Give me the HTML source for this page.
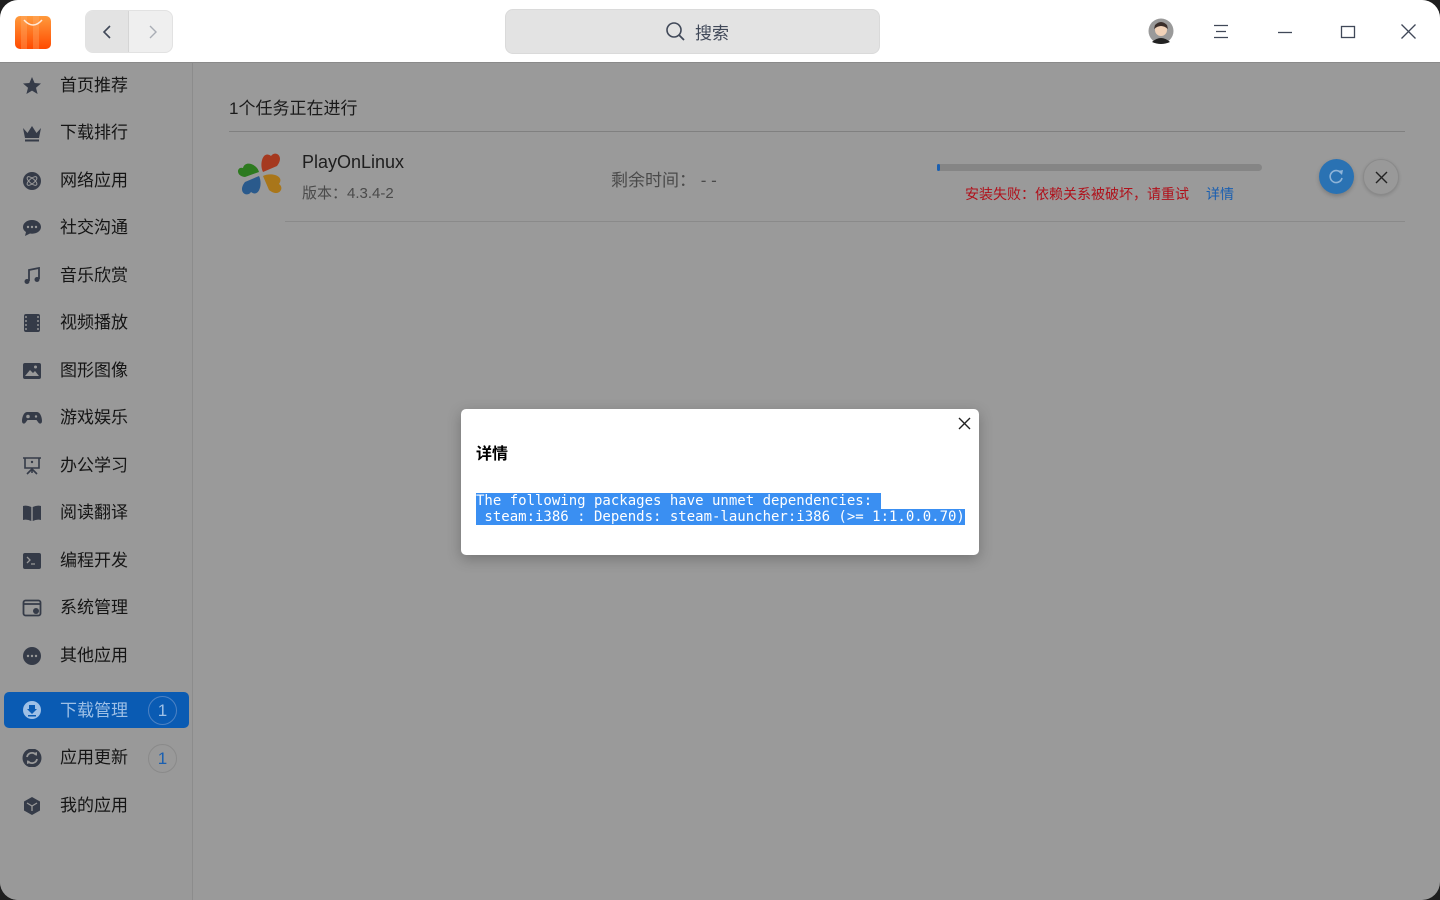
<!DOCTYPE html>
<html><head><meta charset="utf-8"><style>
*{margin:0;padding:0;box-sizing:border-box}
body{width:1440px;height:900px;background:#1e1e1e;font-family:"Liberation Sans","Noto Sans CJK SC",sans-serif;overflow:hidden;position:relative}
.win{position:absolute;left:0;top:0;width:1440px;height:900px;border-radius:18px;overflow:hidden;background:#9a9a9a}
.title{position:absolute;left:0;top:0;width:1440px;height:63px;background:#fff;border-bottom:1px solid #8a8a8a}
.side{position:absolute;left:0;top:63px;width:193px;height:837px;background:#999;border-right:1px solid #8c8c8c}
.item{position:absolute;left:0;height:36px;width:193px;font-size:17px;color:#151515;line-height:36px}
.item .ic{position:absolute;left:22px;top:9px;width:20px;height:18px}
.item span{position:absolute;left:60px}
.sel{left:4px;width:185px;background:#0a5bb3;border-radius:5px;color:#9ec0e6}
.badge{position:absolute;left:148px;top:4px;width:29px;height:29px;border:1px solid #8a8a8a;border-radius:50%;text-align:center;line-height:27px;font-size:17px;color:#1a5fb0}
.mono{font-family:"DejaVu Sans Mono","Liberation Mono",monospace;font-size:14px;line-height:16px;white-space:pre;color:#fff}
.mono span{background:#3a8ff2}
</style></head><body>
<div class="win">
<div class="title">
 <svg style="position:absolute;left:15px;top:14px" width="36" height="35" viewBox="0 0 36 35"><defs><linearGradient id="g" x1="0" y1="0" x2="0" y2="1"><stop offset="0" stop-color="#ff9a3c"/><stop offset="1" stop-color="#ff4a00"/></linearGradient></defs><rect x="0" y="2" width="36" height="33" rx="5" fill="url(#g)"/><rect x="6" y="2" width="6" height="33" fill="#ffb070" opacity=".35"/><rect x="18" y="2" width="6" height="33" fill="#ffb070" opacity=".35"/><path d="M9 6 Q18 16 27 6" stroke="#fff" stroke-width="1.5" fill="none" opacity=".8"/></svg>
 <div style="position:absolute;left:85px;top:10px;width:88px;height:43px;border-radius:8px;background:#efefef;border:1px solid #e2e2e2;overflow:hidden"><div style="position:absolute;left:0;top:0;width:43px;height:43px;background:#e3e3e3;border-right:1px solid #d5d5d5"></div>
 <svg style="position:absolute;left:14px;top:13px" width="16" height="16"><path d="M10 2 L4 8 L10 14" stroke="#404858" stroke-width="1.6" fill="none"/></svg>
 <svg style="position:absolute;left:58px;top:13px" width="16" height="16"><path d="M6 2 L12 8 L6 14" stroke="#a9adb5" stroke-width="1.4" fill="none"/></svg></div>
 <div style="position:absolute;left:505px;top:9px;width:375px;height:45px;border-radius:8px;background:#e3e3e3;border:1px solid #dadada"></div>
 <svg style="position:absolute;left:665px;top:21px" width="22" height="22"><circle cx="9" cy="9" r="7" stroke="#404858" stroke-width="1.6" fill="none"/><path d="M14 14 L19 19" stroke="#404858" stroke-width="1.8"/></svg>
 <div style="position:absolute;left:695px;top:19px;font-size:17px;color:#404858">搜索</div>
 <svg style="position:absolute;left:1148px;top:18px" width="26" height="26"><circle cx="13" cy="13" r="12.5" fill="#9a9a9a"/><circle cx="13" cy="12" r="6" fill="#f1d2b8"/><path d="M7 7 Q13 1 19 7 L20 11 Q13 5 6 11Z" fill="#3a2e2a"/><path d="M4 24 Q13 16 22 24 Q13 28 4 24Z" fill="#222"/></svg>
 <svg style="position:absolute;left:1213px;top:24px" width="16" height="16"><path d="M1 1.5H15M3 7.5H13M1 13.5H15" stroke="#404858" stroke-width="1.3"/></svg>
 <svg style="position:absolute;left:1277px;top:24px" width="16" height="16"><path d="M1 8.5H15" stroke="#404858" stroke-width="1.3"/></svg>
 <svg style="position:absolute;left:1340px;top:24px" width="16" height="16"><rect x="1.5" y="2.5" width="13" height="11" stroke="#404858" stroke-width="1.3" fill="none"/></svg>
 <svg style="position:absolute;left:1400px;top:23px" width="17" height="17"><path d="M1.5 1.5L15.5 15.5M15.5 1.5L1.5 15.5" stroke="#404858" stroke-width="1.3"/></svg>
</div>
<div class="side">
 <div class="item" style="top:5px"><svg class="ic" viewBox="0 0 20 18"><path d="M10 0 L12.6 6 L19 6.5 L14 10.7 L15.6 17 L10 13.6 L4.4 17 L6 10.7 L1 6.5 L7.4 6Z" fill="#353b48"/></svg><span>首页推荐</span></div>
 <div class="item" style="top:52px"><svg class="ic" viewBox="0 0 20 18"><path d="M1 4 L5.5 9 L10 2 L14.5 9 L19 4 L17 14 H3Z" fill="#353b48"/><rect x="3" y="15.5" width="14" height="2" fill="#353b48"/></svg><span>下载排行</span></div>
 <div class="item" style="top:100px"><svg class="ic" viewBox="0 0 20 18"><circle cx="10" cy="9" r="9" fill="#353b48"/><ellipse cx="10" cy="9" rx="6" ry="2.5" stroke="#999" fill="none" transform="rotate(40 10 9)"/><ellipse cx="10" cy="9" rx="6" ry="2.5" stroke="#999" fill="none" transform="rotate(-40 10 9)"/></svg><span>网络应用</span></div>
 <div class="item" style="top:147px"><svg class="ic" viewBox="0 0 20 18"><path d="M10 1 C4.5 1 1 4.5 1 8 C1 10.5 2.5 12 4 13 L3 17 L8 14.5 C8.6 14.6 9.3 14.7 10 14.7 C15.5 14.7 19 11.5 19 8 C19 4.5 15.5 1 10 1Z" fill="#353b48"/><circle cx="6" cy="8" r="1.2" fill="#999"/><circle cx="10" cy="8" r="1.2" fill="#999"/><circle cx="14" cy="8" r="1.2" fill="#999"/></svg><span>社交沟通</span></div>
 <div class="item" style="top:195px"><svg class="ic" viewBox="0 0 20 18"><path d="M7 14 V3 L17 1 V12" stroke="#353b48" stroke-width="1.8" fill="none"/><circle cx="5" cy="14.5" r="2.5" fill="#353b48"/><circle cx="15" cy="12.5" r="2.5" fill="#353b48"/></svg><span>音乐欣赏</span></div>
 <div class="item" style="top:242px"><svg class="ic" viewBox="0 0 20 18"><rect x="2" y="0" width="16" height="18" rx="2" fill="#353b48"/><path d="M4 2v2M4 6v2M4 10v2M4 14v2M16 2v2M16 6v2M16 10v2M16 14v2" stroke="#999" stroke-width="1.4"/></svg><span>视频播放</span></div>
 <div class="item" style="top:290px"><svg class="ic" viewBox="0 0 20 18"><rect x="1" y="1" width="18" height="16" rx="2" fill="#353b48"/><path d="M3 14 L8 8 L11 11 L13 9 L17 14Z" fill="#999"/><circle cx="13.5" cy="5" r="1.5" fill="#999"/></svg><span>图形图像</span></div>
 <div class="item" style="top:337px"><svg class="ic" viewBox="0 0 20 18"><path d="M5 3 H15 C18 3 20 8 20 12 C20 15 17.5 15.5 16 13 L14.5 11 H5.5 L4 13 C2.5 15.5 0 15 0 12 C0 8 2 3 5 3Z" fill="#353b48"/><circle cx="6" cy="7.5" r="1.8" fill="#999"/><circle cx="14" cy="7.5" r="1.2" fill="#999"/></svg><span>游戏娱乐</span></div>
 <div class="item" style="top:385px"><svg class="ic" viewBox="0 0 20 18"><path d="M1 1H19M3 1V11H17V1M10 11V16M10 12L5 17M10 12L15 17" stroke="#353b48" stroke-width="1.6" fill="none"/><circle cx="10" cy="5" r="1.2" fill="#353b48"/></svg><span>办公学习</span></div>
 <div class="item" style="top:432px"><svg class="ic" viewBox="0 0 20 18"><path d="M1 2 Q5 1 9.3 3 V17 Q5 15 1 16Z M10.7 3 Q15 1 19 2 V16 Q15 15 10.7 17Z" fill="#353b48"/></svg><span>阅读翻译</span></div>
 <div class="item" style="top:480px"><svg class="ic" viewBox="0 0 20 18"><rect x="1" y="1" width="18" height="16" rx="2" fill="#353b48"/><path d="M5 5L8 8L5 11M9 12H13" stroke="#999" stroke-width="1.3" fill="none"/></svg><span>编程开发</span></div>
 <div class="item" style="top:527px"><svg class="ic" viewBox="0 0 20 18"><rect x="1.5" y="1.5" width="17" height="15" rx="2" stroke="#353b48" stroke-width="1.8" fill="none"/><path d="M1.5 5H18.5" stroke="#353b48" stroke-width="1.8"/><circle cx="14" cy="12" r="3" fill="#353b48"/></svg><span>系统管理</span></div>
 <div class="item" style="top:575px"><svg class="ic" viewBox="0 0 20 18"><circle cx="10" cy="9" r="9" fill="#353b48"/><circle cx="6" cy="9" r="1.2" fill="#999"/><circle cx="10" cy="9" r="1.2" fill="#999"/><circle cx="14" cy="9" r="1.2" fill="#999"/></svg><span>其他应用</span></div>
 <div class="item sel" style="top:629px"><svg class="ic" style="left:18px" viewBox="0 0 20 18"><circle cx="10" cy="9" r="9" fill="#9ec0e6"/><path d="M7 4H13V8H15L10 13L5 8H7Z" fill="#0a5bb3"/><rect x="6" y="14" width="8" height="1.5" fill="#0a5bb3"/></svg><span style="left:56px;top:1px">下载管理</span><div class="badge" style="left:144px;color:#9ec0e6;border-color:#4c82c4">1</div></div>
 <div class="item" style="top:677px"><svg class="ic" viewBox="0 0 20 18"><circle cx="10" cy="9" r="9.5" fill="#353b48"/><path d="M5 8 A5 5 0 0 1 14 6 M15 10 A5 5 0 0 1 6 12" stroke="#999" stroke-width="1.8" fill="none"/><path d="M12 4 L15 7 L15 3Z M8 14 L5 11 L5 15Z" fill="#999"/></svg><span>应用更新</span><div class="badge">1</div></div>
 <div class="item" style="top:725px"><svg class="ic" viewBox="0 0 20 18"><path d="M10 0 L18 4.5 V13.5 L10 18 L2 13.5 V4.5Z" fill="#353b48"/><path d="M5 6 L10 9 L15 6 M10 9 V14" stroke="#999" stroke-width="1.3" fill="none"/></svg><span>我的应用</span></div>
</div>
<div style="position:absolute;left:229px;top:94px;font-size:17px;color:#1a1a1a">1个任务正在进行</div>
<div style="position:absolute;left:229px;top:131px;width:1176px;height:1px;background:#808080"></div>
<svg style="position:absolute;left:234px;top:148px" width="54" height="52" viewBox="0 0 54 52"><g transform="translate(27 26)"><path d="M-2 -2 C-4 -10 -16 -14 -18 -6 C-24 -8 -26 2 -16 3 Z" fill="#2d7a1f"/><path d="M2 -2 C-2 -10 2 -24 10 -18 C14 -24 24 -18 16 -8Z" fill="#a5391f"/><path d="M2 2 C10 -2 24 2 18 10 C24 14 18 24 8 16Z" fill="#a9761a"/><path d="M-2 2 C2 10 -2 24 -10 18 C-14 24 -24 18 -16 8Z" fill="#2a5a8c"/></g></svg>
<div style="position:absolute;left:302px;top:152px;font-size:18px;color:#1e1e1e">PlayOnLinux</div>
<div style="position:absolute;left:302px;top:182px;font-size:15px;color:#4a4a4a">版本：4.3.4-2</div>
<div style="position:absolute;left:611px;top:166px;font-size:17px;color:#4a4a4a">剩余时间：&nbsp;- -</div>
<div style="position:absolute;left:937px;top:164px;width:325px;height:7px;border-radius:4px;background:#858585"><div style="width:3px;height:7px;background:#1a5fb0;border-radius:2px"></div></div>
<div style="position:absolute;left:965px;top:184px;font-size:14px;color:#b0101a">安装失败：依赖关系被破坏，请重试</div>
<div style="position:absolute;left:1206px;top:184px;font-size:14px;color:#1a5fb0">详情</div>
<div style="position:absolute;left:1319px;top:159px;width:35px;height:35px;border-radius:50%;background:#2a72b3;box-shadow:0 2px 4px rgba(0,0,0,.2)"><svg style="position:absolute;left:9px;top:9px" width="17" height="17"><path d="M13 5 A6 6 0 1 0 14 10" stroke="#8fb4d8" stroke-width="1.6" fill="none"/><path d="M10 3 L15 2 L14 7Z" fill="#8fb4d8"/></svg></div>
<div style="position:absolute;left:1363px;top:159px;width:36px;height:36px;border-radius:50%;background:#999;border:1px solid #8a8a8a;box-shadow:0 1px 3px rgba(0,0,0,.15)"><svg style="position:absolute;left:11px;top:11px" width="13" height="13"><path d="M1 1L12 12M12 1L1 12" stroke="#222" stroke-width="1.4"/></svg></div>
<div style="position:absolute;left:285px;top:221px;width:1120px;height:1px;background:#8a8a8a"></div>
<div style="position:absolute;left:461px;top:409px;width:518px;height:146px;background:#fff;border-radius:5px;box-shadow:0 4px 14px rgba(0,0,0,.25)">
 <svg style="position:absolute;left:497px;top:8px" width="13" height="13"><path d="M1 1L12 12M12 1L1 12" stroke="#222" stroke-width="1.4"/></svg>
 <div style="position:absolute;left:15px;top:31px;font-size:16px;font-weight:bold;color:#000">详情</div>
 <div class="mono" style="position:absolute;left:15px;top:84px"><span>The following packages have unmet dependencies: </span>
<span> steam:i386 : Depends: steam-launcher:i386 (&gt;= 1:1.0.0.70)</span></div>
</div>
</div>
</body></html>
